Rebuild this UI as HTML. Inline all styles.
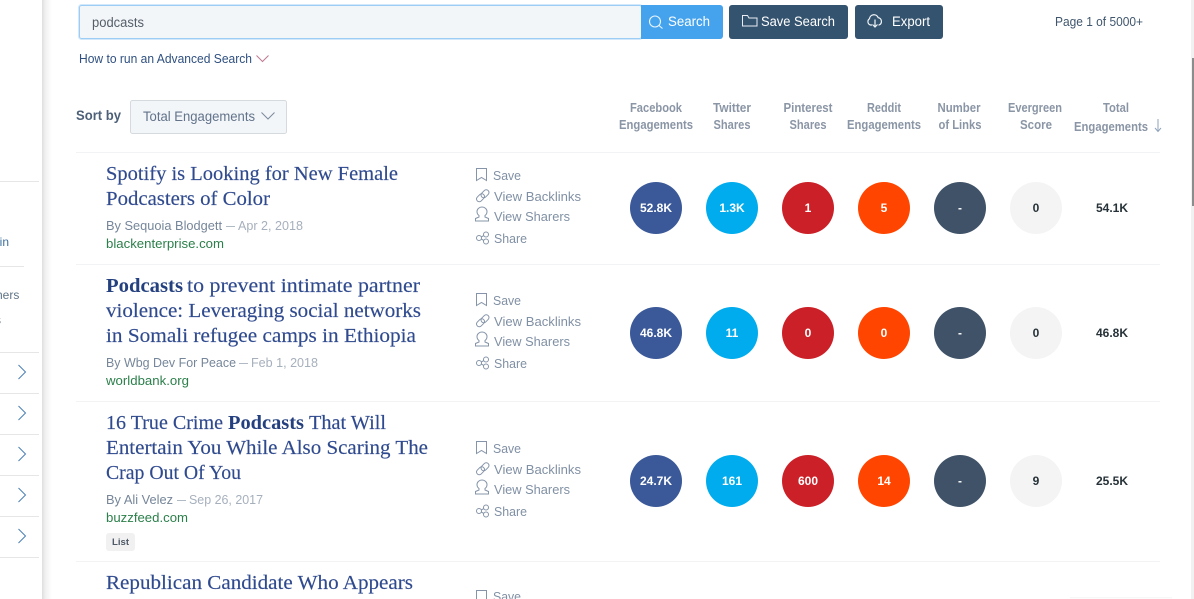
<!DOCTYPE html>
<html><head><meta charset="utf-8"><style>
html,body{margin:0;padding:0;background:#fff;overflow:hidden;width:1194px;height:599px}
svg{display:block}
text{font-family:"Liberation Sans",sans-serif}
.t{font-family:"Liberation Serif",serif;font-size:20px;fill:#2f4a8e;stroke:#2f4a8e;stroke-width:.15}
.tb{font-family:"Liberation Serif",serif;font-size:20px;font-weight:bold;fill:#24407f}
.by{font-size:12.5px;fill:#76869a}
.da{font-size:12.5px;fill:#a6b0bc}
.do{font-size:12.5px;fill:#2b7f4a}
.a{font-size:12.5px;fill:#8090a4}
.h{font-size:12.5px;font-weight:bold;fill:#8a95a5;text-anchor:middle}
.n{font-size:12px;font-weight:bold;fill:#fff;text-anchor:middle}
.k{font-size:12px;font-weight:bold;fill:#263238;text-anchor:middle}
.i{fill:none;stroke:#8594a8;stroke-width:1}
.w{font-size:13.5px;fill:#fff}
.l{stroke:#f2f3f4;stroke-width:1}
.s{stroke:#e6e6e6;stroke-width:1}
.c{fill:none;stroke:#4a7fb5;stroke-width:1}
</style></head><body>
<svg width="1194" height="599" viewBox="0 0 1194 599" xmlns="http://www.w3.org/2000/svg">
<defs>
<linearGradient id="sh" x1="0" x2="1" y1="0" y2="0"><stop offset="0" stop-color="#dedede"/><stop offset=".35" stop-color="#f1f1f1"/><stop offset="1" stop-color="#fff"/></linearGradient>
<linearGradient id="sb" x1="0" x2="0" y1="0" y2="1"><stop offset="0" stop-color="#f4f4f4"/><stop offset="1" stop-color="#fff"/></linearGradient>
<g id="acts">
<path class="i" d="M476.500 168.500h10v12l-5-3-5 3z"/>
<g class="i"><rect x="476" y="195" width="9" height="5.500" rx="2.750" transform="rotate(-45 480.500 197.750)"/><rect x="480.500" y="191" width="9" height="5.500" rx="2.750" transform="rotate(-45 485 193.750)"/></g>
<path class="i" d="M479 215.500c-1.500-1-2-3-2-4a5 4.500 0 0 1 10 0c0 1-.5 3-2 4v1.500l3.500 1.500v2.500h-13v-2.500l3.500-1.500z"/>
<g class="i"><circle cx="479" cy="238" r="2.500"/><circle cx="486" cy="234.500" r="2.500"/><circle cx="486" cy="241.500" r="2.500"/><path d="M481.200 237l2.600-1.400M481.200 239l2.600 1.400"/></g>
<text class="a" x="493" y="180" textLength="28" lengthAdjust="spacingAndGlyphs">Save</text>
<text class="a" x="494" y="201" textLength="87" lengthAdjust="spacingAndGlyphs">View Backlinks</text>
<text class="a" x="494" y="221" textLength="76" lengthAdjust="spacingAndGlyphs">View Sharers</text>
<text class="a" x="494" y="243" textLength="33" lengthAdjust="spacingAndGlyphs">Share</text>
</g>
</defs>

<!-- sidebar -->
<rect x="42" y="0" width="10" height="599" fill="url(#sh)"/>
<path class="s" d="M0 181.500h39M0 266.500h24M0 352.500h39M0 393.500h39M0 434.500h39M0 475.500h39M0 516.500h39M0 557.500h39"/>
<text x="-7" y="246" font-size="12" fill="#3f6f9f">ain</text>
<text x="-4" y="299" font-size="12" fill="#5f7488">hers</text>
<text x="-5" y="324" font-size="12" fill="#5f7488">s</text>
<path class="c" d="M18.500 365l7 7-7 7M18.500 406l7 7-7 7M18.500 447l7 7-7 7M18.500 488l7 7-7 7M18.500 529l7 7-7 7"/>

<!-- search bar -->
<rect x="78.500" y="4.500" width="564" height="35" rx="3" fill="none" stroke="#d3e8fa"/>
<rect x="79.500" y="5.500" width="562" height="33" rx="2" fill="#f3f6f9" stroke="#9ccdf4"/>
<text x="92" y="27" font-size="13.500" fill="#555f69" textLength="52" lengthAdjust="spacingAndGlyphs">podcasts</text>
<path d="M641 5h79a3 3 0 0 1 3 3v28a3 3 0 0 1-3 3h-79z" fill="#45a3ee"/>
<g fill="none" stroke="#eaf5fd" stroke-width="1.100"><circle cx="655" cy="21.500" r="5.500"/><path d="M659 25.500l3.500 3"/></g>
<text class="w" x="668" y="26" textLength="42" lengthAdjust="spacingAndGlyphs">Search</text>
<rect x="729" y="5" width="119" height="34" rx="3" fill="#34536f"/>
<path d="M742.500 15.500h5l1.500 2.500h8v8h-14.500z" fill="none" stroke="#e8eef3" stroke-width="1"/>
<text class="w" x="761" y="26" textLength="74" lengthAdjust="spacingAndGlyphs">Save Search</text>
<rect x="855" y="5" width="88" height="34" rx="3" fill="#34536f"/>
<g fill="none" stroke="#f0f4f7" stroke-width="1.200"><path d="M872 25h-1.500a3.500 3.500 0 0 1-1-6.300 4.500 4.500 0 0 1 8.700-1 3.800 3.800 0 0 1 .8 7.300h-.5"/><path d="M875 19.500v7.500M872.500 24.500l2.500 2.500 2.500-2.500"/></g>
<text class="w" x="892" y="26" textLength="38" lengthAdjust="spacingAndGlyphs">Export</text>
<text x="1055" y="26" font-size="12.500" fill="#3f566d" textLength="88" lengthAdjust="spacingAndGlyphs">Page 1 of 5000+</text>

<text x="79" y="63" font-size="12.500" fill="#2f5080" textLength="173" lengthAdjust="spacingAndGlyphs">How to run an Advanced Search</text>
<path d="M256.500 55.500l6 6 6-6" fill="none" stroke="#c0788f" stroke-width="1"/>

<!-- sort -->
<text x="76" y="120" font-size="14" font-weight="bold" fill="#4d6078" textLength="45" lengthAdjust="spacingAndGlyphs">Sort by</text>
<rect x="130.500" y="100.500" width="156" height="33" rx="2" fill="#f3f6f9" stroke="#d5dade"/>
<text x="143" y="121" font-size="13.500" fill="#62738a" textLength="112" lengthAdjust="spacingAndGlyphs">Total Engagements</text>
<path d="M261.500 112.500l6.500 6.500 6.500-6.500" fill="none" stroke="#7b8a9c" stroke-width="1"/>

<!-- headers -->
<g lengthAdjust="spacingAndGlyphs">
<text class="h" x="656" y="112" textLength="52" lengthAdjust="spacingAndGlyphs">Facebook</text><text class="h" x="656" y="129" textLength="74" lengthAdjust="spacingAndGlyphs">Engagements</text>
<text class="h" x="732" y="112" textLength="38" lengthAdjust="spacingAndGlyphs">Twitter</text><text class="h" x="732" y="129" textLength="37" lengthAdjust="spacingAndGlyphs">Shares</text>
<text class="h" x="808" y="112" textLength="49" lengthAdjust="spacingAndGlyphs">Pinterest</text><text class="h" x="808" y="129" textLength="37" lengthAdjust="spacingAndGlyphs">Shares</text>
<text class="h" x="884" y="112" textLength="34" lengthAdjust="spacingAndGlyphs">Reddit</text><text class="h" x="884" y="129" textLength="74" lengthAdjust="spacingAndGlyphs">Engagements</text>
<text class="h" x="959" y="112" textLength="43" lengthAdjust="spacingAndGlyphs">Number</text><text class="h" x="960" y="129" textLength="43" lengthAdjust="spacingAndGlyphs">of Links</text>
<text class="h" x="1035" y="112" textLength="54" lengthAdjust="spacingAndGlyphs">Evergreen</text><text class="h" x="1036" y="129" textLength="32" lengthAdjust="spacingAndGlyphs">Score</text>
<text class="h" x="1116" y="112" textLength="26" lengthAdjust="spacingAndGlyphs">Total</text><text class="h" x="1111" y="131" textLength="74" lengthAdjust="spacingAndGlyphs">Engagements</text>
</g>
<path d="M1158 119v12M1155 128l3 3.500 3-3.500" fill="none" stroke="#8fa3bd" stroke-width="1"/>

<path class="l" d="M76 152.500h1084M76 264.500h1084M76 401.500h1084M76 561.500h1084"/>

<!-- row 1 -->
<text class="t" x="106" y="180" textLength="292" lengthAdjust="spacingAndGlyphs">Spotify is Looking for New Female</text>
<text class="t" x="106" y="205" textLength="164" lengthAdjust="spacingAndGlyphs">Podcasters of Color</text>
<text class="by" x="106" y="230" textLength="116" lengthAdjust="spacingAndGlyphs">By Sequoia Blodgett</text>
<text class="da" x="226" y="230" textLength="9" lengthAdjust="spacingAndGlyphs">—</text>
<text class="da" x="238" y="230" textLength="65" lengthAdjust="spacingAndGlyphs">Apr 2, 2018</text>
<text class="do" x="106" y="248" textLength="118" lengthAdjust="spacingAndGlyphs">blackenterprise.com</text>
<use href="#acts"/>
<circle cx="656" cy="208" r="26" fill="#3b5998"/><text class="n" x="656" y="212">52.8K</text>
<circle cx="732" cy="208" r="26" fill="#00aced"/><text class="n" x="732" y="212">1.3K</text>
<circle cx="808" cy="208" r="26" fill="#cb2027"/><text class="n" x="808" y="212">1</text>
<circle cx="884" cy="208" r="26" fill="#ff4500"/><text class="n" x="884" y="212">5</text>
<circle cx="960" cy="208" r="26" fill="#3f5268"/><text class="n" x="960" y="212">-</text>
<circle cx="1036" cy="208" r="26" fill="#f4f4f4"/><text class="k" x="1036" y="212">0</text>
<text class="k" x="1112" y="212">54.1K</text>

<!-- row 2 -->
<text class="tb" x="106" y="292" textLength="77" lengthAdjust="spacingAndGlyphs">Podcasts</text>
<text class="t" x="187" y="292" textLength="233" lengthAdjust="spacingAndGlyphs">to prevent intimate partner</text>
<text class="t" x="106" y="317" textLength="315" lengthAdjust="spacingAndGlyphs">violence: Leveraging social networks</text>
<text class="t" x="106" y="342" textLength="310" lengthAdjust="spacingAndGlyphs">in Somali refugee camps in Ethiopia</text>
<text class="by" x="106" y="367" textLength="130" lengthAdjust="spacingAndGlyphs">By Wbg Dev For Peace</text>
<text class="da" x="239" y="367" textLength="9" lengthAdjust="spacingAndGlyphs">—</text>
<text class="da" x="251" y="367" textLength="67" lengthAdjust="spacingAndGlyphs">Feb 1, 2018</text>
<text class="do" x="106" y="385" textLength="83" lengthAdjust="spacingAndGlyphs">worldbank.org</text>
<use href="#acts" y="125"/>
<circle cx="656" cy="333" r="26" fill="#3b5998"/><text class="n" x="656" y="337">46.8K</text>
<circle cx="732" cy="333" r="26" fill="#00aced"/><text class="n" x="732" y="337">11</text>
<circle cx="808" cy="333" r="26" fill="#cb2027"/><text class="n" x="808" y="337">0</text>
<circle cx="884" cy="333" r="26" fill="#ff4500"/><text class="n" x="884" y="337">0</text>
<circle cx="960" cy="333" r="26" fill="#3f5268"/><text class="n" x="960" y="337">-</text>
<circle cx="1036" cy="333" r="26" fill="#f4f4f4"/><text class="k" x="1036" y="337">0</text>
<text class="k" x="1112" y="337">46.8K</text>

<!-- row 3 -->
<text class="t" x="106" y="429" textLength="117" lengthAdjust="spacingAndGlyphs">16 True Crime</text>
<text class="tb" x="228" y="429" textLength="76" lengthAdjust="spacingAndGlyphs">Podcasts</text>
<text class="t" x="309" y="429" textLength="77" lengthAdjust="spacingAndGlyphs">That Will</text>
<text class="t" x="106" y="454" textLength="322" lengthAdjust="spacingAndGlyphs">Entertain You While Also Scaring The</text>
<text class="t" x="106" y="479" textLength="135" lengthAdjust="spacingAndGlyphs">Crap Out Of You</text>
<text class="by" x="106" y="504" textLength="67" lengthAdjust="spacingAndGlyphs">By Ali Velez</text>
<text class="da" x="177" y="504" textLength="9" lengthAdjust="spacingAndGlyphs">—</text>
<text class="da" x="189" y="504" textLength="74" lengthAdjust="spacingAndGlyphs">Sep 26, 2017</text>
<text class="do" x="106" y="522" textLength="82" lengthAdjust="spacingAndGlyphs">buzzfeed.com</text>
<rect x="106" y="533" width="29" height="18" rx="3" fill="#f1f1f1"/>
<text x="112" y="545" font-size="9.500" font-weight="bold" fill="#4f5a68" textLength="17" lengthAdjust="spacingAndGlyphs">List</text>
<use href="#acts" y="273"/>
<circle cx="656" cy="481" r="26" fill="#3b5998"/><text class="n" x="656" y="485">24.7K</text>
<circle cx="732" cy="481" r="26" fill="#00aced"/><text class="n" x="732" y="485">161</text>
<circle cx="808" cy="481" r="26" fill="#cb2027"/><text class="n" x="808" y="485">600</text>
<circle cx="884" cy="481" r="26" fill="#ff4500"/><text class="n" x="884" y="485">14</text>
<circle cx="960" cy="481" r="26" fill="#3f5268"/><text class="n" x="960" y="485">-</text>
<circle cx="1036" cy="481" r="26" fill="#f4f4f4"/><text class="k" x="1036" y="485">9</text>
<text class="k" x="1112" y="485">25.5K</text>

<!-- row 4 -->
<text class="t" x="106" y="589" textLength="307" lengthAdjust="spacingAndGlyphs">Republican Candidate Who Appears</text>
<path class="i" d="M476.500 590.500h10v12l-5-3-5 3z"/>
<text class="a" x="493" y="601" textLength="28" lengthAdjust="spacingAndGlyphs">Save</text>

<!-- scrollbar & bottom shadow -->
<rect x="1191" y="0" width="3" height="599" fill="#f1f1f1"/>
<rect x="1192" y="58" width="2" height="148" fill="#8c8c8c"/>
<rect x="1070" y="597" width="102" height="2" fill="url(#sb)"/>
</svg>
</body></html>
